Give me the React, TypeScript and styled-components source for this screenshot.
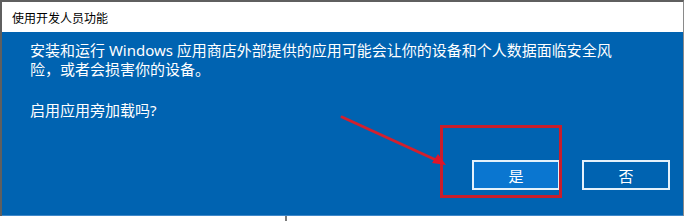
import React from "react"
import styled, { createGlobalStyle } from "styled-components"

const GlobalStyle = createGlobalStyle`
  html, body {
    margin: 0;
    padding: 0;
    background: #ffffff;
  }
  body {
    font-family: "Segoe UI", "Noto Sans", "Noto Sans CJK SC", sans-serif;
  }
`

const Window = styled.div`
  position: relative;
  width: 681px;
  border-top: 2px solid #5f5f5f;
  border-left: 2px solid #5f5f5f;
  border-right: 1px solid #8a8a8a;
  background: #ffffff;
`

const TitleBar = styled.div`
  height: 30px;
  display: flex;
  align-items: center;
  padding-left: 10px;
  font-size: 12px;
  color: #000000;
  font-family: "Noto Sans CJK SC", sans-serif;
`

const Body = styled.div`
  height: 174px;
  display: flex;
  flex-direction: column;
  padding: 9px 13px 0 28px;
  background: #0063b1;
  border-bottom: 1px solid #3f88c9;
  color: #ffffff;
  font-size: 15px;
  line-height: 19px;
`

const Message = styled.p`
  margin: 0;
  width: 598px;
`

const Question = styled.p`
  margin: 22px 0 0;
`

const ButtonRow = styled.div`
  display: flex;
  justify-content: flex-end;
  gap: 22px;
  margin-top: 40px;
`

const DialogButton = styled.button<{ $primary?: boolean }>`
  width: 88px;
  height: 30px;
  box-sizing: border-box;
  border: 2px solid #e4f1fb;
  background: ${(p) => (p.$primary ? "#0a76d0" : "#0063b1")};
  color: #ffffff;
  font-family: "Noto Sans CJK SC", sans-serif;
  font-size: 15px;
  padding: 0;
  cursor: pointer;
`

const Backdrop = styled.div`
  height: 6px;
  display: flex;
  padding-left: 285px;
`

const BackdropEdge = styled.div`
  width: 2px;
  background: #7a7a7a;
`

const Highlight = styled.div`
  position: absolute;
  left: 438px;
  top: 123px;
  width: 116px;
  height: 67px;
  border: 3px solid #c81e2c;
  pointer-events: none;
`

const Arrow = styled.svg`
  position: absolute;
  left: 0;
  top: 0;
  pointer-events: none;
`

const App: React.FC = () => {
  return (
    <>
      <GlobalStyle />
      <Window>
        <TitleBar>使用开发人员功能</TitleBar>
        <Body>
          <Message>
            安装和运行 Windows 应用商店外部提供的应用可能会让你的设备和个人数据面临安全风险，或者会损害你的设备。
          </Message>
          <Question>启用应用旁加载吗?</Question>
          <ButtonRow>
            <DialogButton $primary>是</DialogButton>
            <DialogButton>否</DialogButton>
          </ButtonRow>
        </Body>
        <Highlight />
        <Arrow width="683" height="215" viewBox="-2 -2 683 215">
          <line x1="338" y1="113" x2="432" y2="156" stroke="#d3202e" strokeWidth="3" strokeLinecap="round" />
          <polygon points="442,161 428,159 434,150" fill="#e0142a" />
        </Arrow>
      </Window>
      <Backdrop>
        <BackdropEdge />
      </Backdrop>
    </>
  )
}

export default App
